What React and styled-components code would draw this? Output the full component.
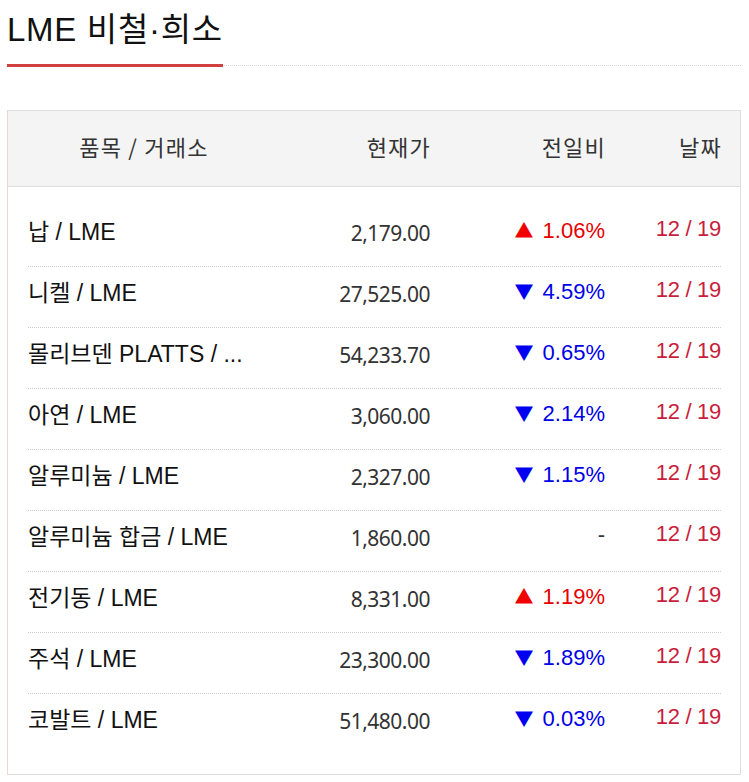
import React from 'react';
import styled, { createGlobalStyle } from 'styled-components';

const GlobalStyle = createGlobalStyle`
  body {
    margin: 0;
    background: #fff;
    font-family: 'Liberation Sans', 'Noto Sans CJK KR', sans-serif;
  }
`;

const Page = styled.div`
  width: 734px;
  padding: 0 8px 0 7px;
`;

const TitleWrap = styled.div`
  border-bottom: 1px dotted #d8d8d8;
  display: flex;
`;

const Title = styled.h2`
  margin: 0;
  padding-top: 12px;
  padding-bottom: 16px;
  font-size: 33px;
  line-height: 36px;
  font-weight: normal;
  color: #111;
  letter-spacing: 0.7px;
  border-bottom: 3px solid #d13f3f;
  margin-bottom: -2px;
`;

const Board = styled.div`
  margin-top: 44px;
  border: 1px solid #dedede;
  border-left-color: #ecd6d6;
`;

const Cols = `
  display: grid;
  grid-template-columns: 232px 170px 175px 116px;
  align-items: center;
`;

const Head = styled.div`
  ${Cols}
  height: 75px;
  padding: 0 19px 0 20px;
  background: #f4f4f4;
  border-bottom: 1px solid #dedede;
  font-family: 'Noto Sans CJK KR', sans-serif;
  font-size: 22px;
  letter-spacing: 1.2px;
  color: #333;
`;

const HeadCell = styled.div`
  text-align: ${(p) => p.align || 'right'};
  padding-bottom: 6px;
  margin-right: ${(p) => (p.align === 'center' ? '0' : '-1px')};
`;

const Body = styled.div`
  padding: 19px 19px 20px 20px;
`;

const Row = styled.div`
  ${Cols}
  height: 60px;
  border-top: ${(p) => (p.first ? 'none' : '1px dotted #cfcfcf')};
`;

const Name = styled.div`
  font-size: 23px;
  color: #111;
  white-space: nowrap;
  padding-bottom: 12px;
`;

const Price = styled.div`
  text-align: right;
  font-family: 'Noto Sans', sans-serif;
  font-size: 21px;
  color: #333;
  letter-spacing: -0.5px;
  padding-bottom: 6px;
`;

const Change = styled.div`
  text-align: right;
  font-size: 22px;
  padding-bottom: 12px;
  color: ${(p) => (p.dir === 'up' ? '#e60000' : p.dir === 'down' ? '#0000e6' : '#333')};
`;

const Arrow = styled.span`
  font-family: 'Noto Sans CJK KR', sans-serif;
  font-size: 19px;
  margin-right: 9px;
  color: ${(p) => (p.dir === 'up' ? '#f00000' : '#0000f0')};
`;

const DateCell = styled.div`
  text-align: right;
  font-size: 22px;
  letter-spacing: -0.3px;
  color: #c81e3c;
  padding-bottom: 14px;
`;

// names come pre-shortened, the way the source list shows them
const rows = [
  { name: '납 / LME', price: '2,179.00', dir: 'up', rate: '1.06%' },
  { name: '니켈 / LME', price: '27,525.00', dir: 'down', rate: '4.59%' },
  { name: '몰리브덴 PLATTS / ...', price: '54,233.70', dir: 'down', rate: '0.65%' },
  { name: '아연 / LME', price: '3,060.00', dir: 'down', rate: '2.14%' },
  { name: '알루미늄 / LME', price: '2,327.00', dir: 'down', rate: '1.15%' },
  { name: '알루미늄 합금 / LME', price: '1,860.00', dir: 'flat', rate: '' },
  { name: '전기동 / LME', price: '8,331.00', dir: 'up', rate: '1.19%' },
  { name: '주석 / LME', price: '23,300.00', dir: 'down', rate: '1.89%' },
  { name: '코발트 / LME', price: '51,480.00', dir: 'down', rate: '0.03%' },
];

const App = () => (
  <Page>
    <GlobalStyle />
    <TitleWrap>
      <Title>LME 비철·희소</Title>
    </TitleWrap>
    <Board>
      <Head>
        <HeadCell align="center">품목 / 거래소</HeadCell>
        <HeadCell>현재가</HeadCell>
        <HeadCell>전일비</HeadCell>
        <HeadCell>날짜</HeadCell>
      </Head>
      <Body>
        {rows.map((r, i) => (
          <Row key={r.name} first={i === 0}>
            <Name>{r.name}</Name>
            <Price>{r.price}</Price>
            <Change dir={r.dir}>
              {r.dir !== 'flat' && <Arrow dir={r.dir}>{r.dir === 'up' ? '▲' : '▼'}</Arrow>}
              {r.dir === 'flat' ? '-' : r.rate}
            </Change>
            <DateCell>12 / 19</DateCell>
          </Row>
        ))}
      </Body>
    </Board>
  </Page>
);

export default App;
